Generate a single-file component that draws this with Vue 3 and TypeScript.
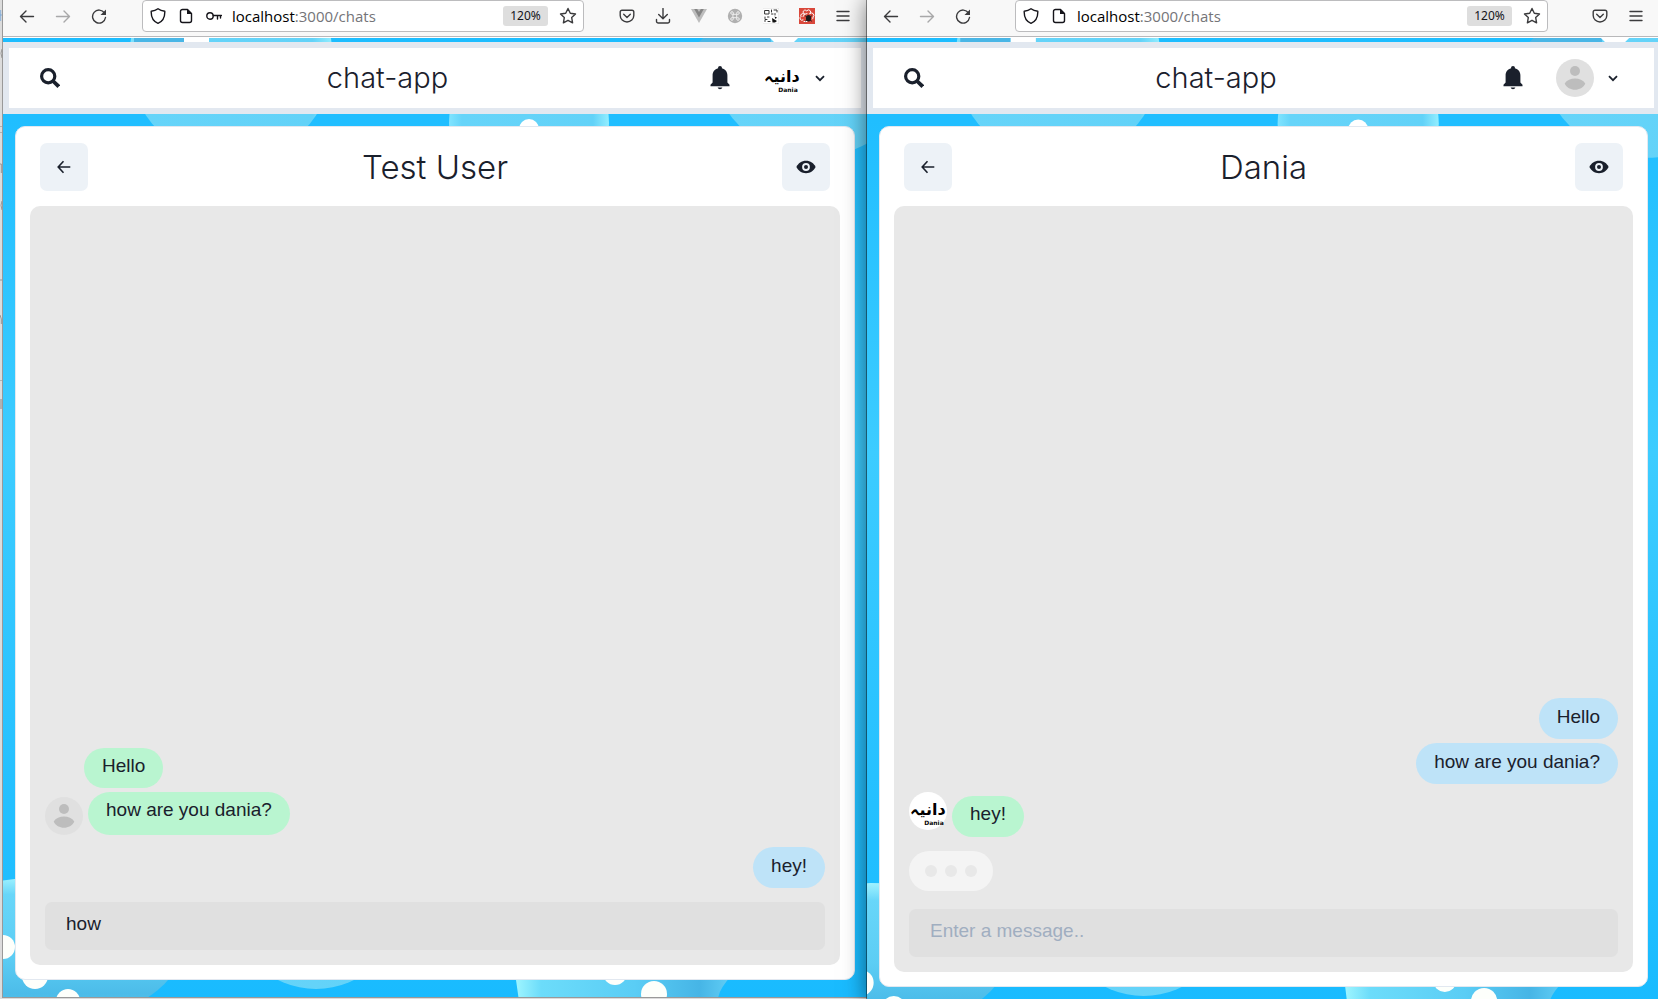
<script setup lang="ts">
import { ref } from 'vue'

interface Message {
  text: string
  mine: boolean
  avatar?: 'person' | 'logo'
  startsGroup?: boolean
}

interface BrowserWindow {
  id: string
  tools: string[]
  savedLogin: boolean
  account: 'person' | 'logo'
  peer: string
  messages: Message[]
  typing: boolean
}

const windows: BrowserWindow[] = [
  {
    id: 'left',
    tools: ['pocket', 'download', 'vue', 'command', 'qr', 'bug', 'menu'],
    savedLogin: true,
    account: 'logo',
    peer: 'Test User',
    typing: false,
    messages: [
      { text: 'Hello', mine: false },
      { text: 'how are you dania?', mine: false, avatar: 'person' },
      { text: 'hey!', mine: true, startsGroup: true },
    ],
  },
  {
    id: 'right',
    tools: ['pocket', 'menu'],
    savedLogin: false,
    account: 'person',
    peer: 'Dania',
    typing: true,
    messages: [
      { text: 'Hello', mine: true },
      { text: 'how are you dania?', mine: true },
      { text: 'hey!', mine: false, avatar: 'logo', startsGroup: true },
    ],
  },
]

const drafts = ref<Record<string, string>>({ left: 'how', right: '' })
</script>

<template>
  <main class="desktop">
    <svg class="behind" viewBox="0 0 3 999" preserveAspectRatio="none" aria-hidden="true">
      <path d="M0 15h3M1 10v11" stroke="#7aa7d8" fill="none" />
      <path d="M3 49q-3 4 0 9M3 201q-3 4 0 9M0 280h3M0 164h2v9M0 315l2 4v5" stroke="#8a8a8a" fill="none" />
      <path d="M0 126.500h3M0 132.500h3M0 380.500h3" stroke="#aaa" fill="none" />
      <path d="M1.500 399v10" stroke="#777" />
    </svg>

    <section v-for="w in windows" :key="w.id" class="window" :class="w.id">
      <nav class="toolbar" aria-label="Browser toolbar">
        <button class="tool" aria-label="Back">
          <svg width="16" height="16" viewBox="0 0 16 16"><path d="M14.500 8.500H1.500M7 3L1.500 8.500 7 14" /></svg>
        </button>
        <button class="tool off" aria-label="Forward">
          <svg width="16" height="16" viewBox="0 0 16 16"><path d="M1.500 8.500h13M9 3l5.500 5.500L9 14" /></svg>
        </button>
        <button class="tool" aria-label="Reload">
          <svg width="16" height="16" viewBox="0 0 16 16">
            <path d="M13.500 5A6.500 6.500 0 1 0 14.500 9.500" /><path d="M15 1.500V7H9.500z" fill="#3b3b3d" stroke="none" />
          </svg>
        </button>
        <div class="address">
          <svg class="mark" width="16" height="16" viewBox="0 0 16 16"><path d="M8 .8C6 2.300 3.500 3 1.200 3.200 1 9 3.500 13.500 8 15.300c4.500-1.800 7-6.300 6.800-12.100C12.500 3 10 2.300 8 .8z" /></svg>
          <svg class="mark" width="16" height="16" viewBox="0 0 16 16"><path d="M9.500 1.500h-5a2 2 0 0 0-2 2v9a2 2 0 0 0 2 2h7a2 2 0 0 0 2-2v-7z" /><path d="M9 1l5 5H9z" fill="#15141a" stroke="none" /></svg>
          <svg v-if="w.savedLogin" class="mark" width="16" height="16" viewBox="0 0 16 16"><circle cx="4" cy="8" r="3.200" /><path d="M7.200 7.500H15.500M11.500 7.500V11M14.500 7.500V10" /></svg>
          <span class="url"><b>localhost</b>:3000/chats</span>
          <button class="zoom">120%</button>
          <button class="star" aria-label="Bookmark this page">
            <svg width="18" height="18" viewBox="0 0 18 18"><path d="M9 1.500l2.300 4.800 5.200.7-3.800 3.600.9 5.200L9 13.300l-4.600 2.500.9-5.200L1.500 7l5.200-.7z" /></svg>
          </button>
        </div>
        <button v-for="t in w.tools" :key="t" class="tool" :aria-label="t">
          <svg v-if="t === 'pocket'" width="16" height="16" viewBox="0 0 16 16"><path d="M3 2.200h10a1.800 1.800 0 0 1 1.800 1.800v3.500a6.800 6.500 0 0 1-13.600 0V4A1.800 1.800 0 0 1 3 2.200zM4.700 6.300L8 9.400l3.300-3.100" /></svg>
          <svg v-else-if="t === 'download'" width="16" height="16" viewBox="0 0 16 16"><path d="M8 .5v10M3.700 6.500L8 10.700l4.300-4.200M1.500 11.500v1.700a1.800 1.800 0 0 0 1.800 1.800h9.400a1.800 1.800 0 0 0 1.800-1.800v-1.700" /></svg>
          <svg v-else-if="t === 'vue'" width="16" height="16" viewBox="0 0 16 16"><path d="M0 1h16L8 15z" fill="#bdbdbd" stroke="none" /><path d="M3.200 1h3L8 4l1.800-3h3L8 9.500z" fill="#858585" stroke="none" /></svg>
          <svg v-else-if="t === 'command'" width="16" height="16" viewBox="0 0 16 16"><circle cx="8" cy="8" r="7.200" fill="#b0b0b0" stroke="none" /><path d="M6.300 6.300h3.400v3.400H6.300zM6.300 6.300V5A1.300 1.300 0 1 0 5 6.300zM9.700 6.300H11A1.300 1.300 0 1 0 9.700 5zM9.700 9.700V11A1.300 1.300 0 1 0 11 9.700zM6.300 9.700H5A1.300 1.300 0 1 0 6.300 11z" class="thin" stroke="#eee" /></svg>
          <svg v-else-if="t === 'qr'" class="thin" width="16" height="16" viewBox="0 0 16 16">
            <path d="M0 0h16v16H0z" fill="#fff" stroke="#ddd" />
            <path d="M2 2.500h4v3.500H2zM2 9v1.500M4.500 9H6M4 11.500H2v2M5 13.500h2M8.500 2v2M8.500 6H10M11 2h3v2M12 5.500v1.500" stroke="#333" />
            <path d="M9 10l5 3-2 1.500H9.500zM11.500 8.500l2.500 1-1.500 1.500z" fill="#111" stroke="none" />
          </svg>
          <svg v-else-if="t === 'bug'" class="thin" width="16" height="16" viewBox="0 0 16 16">
            <path d="M0 0h16v16H0z" fill="#d9483b" stroke="none" />
            <path d="M5.500 6a2 2 0 1 1 2.300-3 2 2 0 1 1 3 2.500M5 6a2 2 0 0 0-3 2.500 2 2 0 0 0 2 3.500M11 5.500a2 2 0 0 1 3 3.500 2 2 0 0 1-.5 2M4 8.500a4 4 0 0 1 4-3M5 13.500h3" stroke="#fff" />
            <ellipse cx="9.500" cy="10.300" rx="2.500" ry="3.200" fill="#1c1c1c" stroke="none" /><path d="M6.500 8l6 5M12.500 8l-6 5" stroke="#1c1c1c" />
          </svg>
          <svg v-else width="16" height="16" viewBox="0 0 16 16"><path d="M2 3.500h12M2 8h12M2 12.500h12" /></svg>
        </button>
      </nav>

      <div class="page">
        <svg class="backdrop" viewBox="0 38 864 959" preserveAspectRatio="xMidYMid slice" aria-hidden="true">
          <defs>
            <linearGradient :id="w.id + '-sky'" x1="0" y1="0" x2="0" y2="1">
              <stop offset="0" stop-color="#1abcff" /><stop offset=".12" stop-color="#20beff" />
              <stop offset=".45" stop-color="#3dccff" /><stop offset=".8" stop-color="#24c0ff" /><stop offset="1" stop-color="#19bbff" />
            </linearGradient>
            <linearGradient :id="w.id + '-bubble'" x1="0" y1="0" x2="1" y2="0">
              <stop offset="0" stop-color="#80e4ff" /><stop offset=".08" stop-color="#66d4f9" />
              <stop offset=".9" stop-color="#62d2f8" /><stop offset="1" stop-color="#93eeff" />
            </linearGradient>
            <linearGradient :id="w.id + '-shade'" x1="0" y1="0" x2="1" y2="0">
              <stop offset="0" stop-color="#a0f6ff" /><stop offset=".12" stop-color="#6cdcfa" />
              <stop offset=".55" stop-color="#5acdf5" /><stop offset=".85" stop-color="#46b5e6" /><stop offset="1" stop-color="#62cff6" />
            </linearGradient>
            <linearGradient :id="w.id + '-corner'" x1="0" y1="0" x2="0" y2="1">
              <stop offset="0" stop-color="#a0f2ff" /><stop offset=".12" stop-color="#68d6f9" />
              <stop offset=".55" stop-color="#5ccdf4" /><stop offset=".8" stop-color="#4cbce9" /><stop offset="1" stop-color="#58c6ee" />
            </linearGradient>
          </defs>
          <path d="M0 0h864v1000H0z" :fill="`url(#${w.id}-sky)`" />
          <g :fill="`url(#${w.id}-bubble)`">
            <circle cx="228" cy="59" r="102" /><circle cx="526" cy="123" r="80" />
            <circle cx="812" cy="50" r="107" /><circle cx="313" cy="904" r="85" />
          </g>
          <path d="M131 38h50v4h-50zM700 38h68v4h-72z" fill="#49b6e6" />
          <path d="M181 38h25v4h-25zM767 38h28l-4 4h-20z" fill="#fff" />
          <circle cx="526" cy="129" r="10" fill="#fff" />
          <ellipse cx="42" cy="950" rx="135" ry="73" :fill="`url(#${w.id}-corner)`" />
          <path d="M512 960q0 20 4 40h199q0-10 14-25z" :fill="`url(#${w.id}-shade)`" />
          <g fill="#fdfffb">
            <circle cx="0" cy="947" r="12" /><circle cx="32" cy="976" r="13" /><circle cx="65" cy="1001" r="12" />
            <circle cx="612" cy="973" r="12" /><circle cx="651" cy="994" r="13" />
          </g>
        </svg>

        <header class="appbar">
          <button class="search" aria-label="Search user">
            <svg width="20" height="20" viewBox="0 0 20 20"><circle cx="8.200" cy="8.200" r="6.600" fill="none" stroke="#1a202c" stroke-width="3.200" /><path d="M13 13l5.800 5.600" stroke="#1a202c" stroke-width="3.800" /></svg>
          </button>
          <h1 class="brand">chat-app</h1>
          <div class="account">
            <button class="bell" aria-label="Notifications">
              <svg width="20" height="24" viewBox="0 0 20 24"><path d="M10 0c-1.200 0-1.900.8-1.900 1.800v.4C4.700 3 2.600 5.700 2.600 9.400v7.200L.5 18.800v1.400h19v-1.400l-2.100-2.200V9.400c0-3.700-2.100-6.400-5.500-7.200v-.4C11.900.8 11.200 0 10 0zM7.600 21.400a2.500 2.500 0 0 0 4.800 0z" fill="#1a202c" /></svg>
            </button>
            <button class="profile" aria-label="Account menu">
              <svg v-if="w.account === 'person'" class="avatar" viewBox="0 0 38 38"><circle cx="19" cy="19" r="19" fill="#e0e0e0" /><circle cx="19" cy="12" r="5" fill="#bdbdbd" /><path d="M8.700 24.500c4-6.600 16.600-6.600 20.600 0-3.500 8.300-17.100 8.300-20.600 0z" fill="#bdbdbd" /></svg>
              <svg v-else class="avatar" viewBox="0 0 38 38"><circle cx="19" cy="19" r="19" fill="#fff" /><text x="19" y="23" class="script">دانیہ</text><text x="25" y="33" class="caption">Dania</text></svg>
              <svg width="20" height="20" viewBox="0 0 20 20"><path d="M6 8.200l4 4 4-4" fill="none" stroke="#1a202c" stroke-width="1.800" /></svg>
            </button>
          </div>
        </header>

        <article class="card">
          <div class="head">
            <button class="square" aria-label="Back to chats">
              <svg width="14" height="14" viewBox="0 0 14 14"><path d="M13.300 7H1.500M6.500 1.300L1.200 7l5.300 5.700" fill="none" stroke="#1a202c" stroke-width="1.600" /></svg>
            </button>
            <h2 class="peer">{{ w.peer }}</h2>
            <button class="square" aria-label="View profile">
              <svg width="20" height="14" viewBox="0 0 20 14"><path d="M10 .8c4.500 0 7.800 2.500 9.600 6.200-1.800 3.700-5.100 6.200-9.600 6.200S2.200 10.700.4 7C2.200 3.300 5.500.8 10 .8z" fill="#1a202c" /><circle cx="10" cy="7" r="3.900" fill="#edf2f7" /><circle cx="10" cy="7" r="2" fill="#1a202c" /></svg>
            </button>
          </div>
          <div class="chat">
            <div class="log">
              <div v-for="m in w.messages" :key="m.text" class="row" :class="{ mine: m.mine, group: m.startsGroup, bare: !m.mine && !m.avatar }">
                <svg v-if="m.avatar === 'person'" class="avatar low" viewBox="0 0 38 38"><circle cx="19" cy="19" r="19" fill="#e0e0e0" /><circle cx="19" cy="12" r="5" fill="#bdbdbd" /><path d="M8.700 24.500c4-6.600 16.600-6.600 20.600 0-3.500 8.300-17.100 8.300-20.600 0z" fill="#bdbdbd" /></svg>
                <svg v-else-if="m.avatar === 'logo'" class="avatar" viewBox="0 0 38 38"><circle cx="19" cy="19" r="19" fill="#fff" /><text x="19" y="23" class="script">دانیہ</text><text x="25" y="33" class="caption">Dania</text></svg>
                <span class="bubble">{{ m.text }}</span>
              </div>
            </div>
            <div v-if="w.typing" class="typing" role="status" aria-label="Typing"><i></i><i></i><i></i></div>
            <input v-model="drafts[w.id]" class="entry" type="text" placeholder="Enter a message.." aria-label="Message" />
          </div>
        </article>
      </div>
    </section>
  </main>
</template>

<style>
body { margin: 0; overflow: hidden; }
</style>

<style scoped>
* { box-sizing: border-box; }
button { border: 0; padding: 0; background: none; font: inherit; color: inherit; display: flex; align-items: center; justify-content: center; }
svg { display: block; flex: none; }
.desktop { display: flex; height: 100vh; overflow: hidden; background: #dcdcdc; font-family: "Liberation Sans", Arial, sans-serif; color: #1a202c; }
.behind { width: 2px; height: 100%; }
.window { display: flex; flex-direction: column; min-width: 0; }
.left { flex: 864 1 0; height: calc(100% - 1px); border-left: 1px solid #999; border-bottom: 1px solid #999; }
.right { flex: 793 1 0; height: calc(100% + 5px); margin-right: -2px; z-index: 1; box-shadow: -1px 0 0 rgba(0, 0, 0, .4), 0 0 22px rgba(0, 0, 0, .55); }

.toolbar { display: flex; align-items: flex-start; height: 38px; padding: 0 6px; background: #f8f8f8; border-bottom: 1px solid #fff; box-shadow: inset 0 -1px 0 #b8b8ba; }
.tool { width: 36px; height: 32px; }
.tool svg, .star svg, .mark { fill: none; stroke: #3b3b3d; stroke-width: 1.4; stroke-linejoin: round; stroke-linecap: round; }
.tool svg.thin, .tool .thin { stroke-width: 1; }
.tool.off { opacity: .42; }
.address { display: flex; align-items: center; flex: 1; height: 32px; margin: 0 25px; padding: 0 6px 0 7px; border: 1px solid #bcbcbe; border-radius: 4px; background: #fff; }
.right .address { margin: 0 34px; }
.mark { margin-right: 12px; stroke: #15141a; }
.url { flex: 1; margin-left: -2px; font: 15px/20px "Open Sans", "Noto Sans", sans-serif; color: #747478; white-space: nowrap; }
.url b { font-weight: 400; color: #000; }
.zoom { width: 45px; height: 20px; border-radius: 3px; background: #dedede; font: 12px/20px "Noto Sans", sans-serif; color: #15141a; }
.star { margin-left: 11px; }

.page { position: relative; flex: 1; display: flex; flex-direction: column; min-height: 0; padding-top: 4px; }
.backdrop { position: absolute; inset: 0; width: 100%; height: 100%; }
.appbar { position: relative; display: flex; align-items: center; justify-content: space-between; height: 72px; padding: 0 12px; border: 6px solid #e2e8f0; background: #fff; }
.search { width: 58px; height: 48px; }
.brand { margin: 0; font: 300 29px/40px Inter, Roboto, sans-serif; }
.account { display: flex; align-items: center; }
.bell { width: 48px; height: 48px; }
.profile { gap: 9px; padding: 0 19px; height: 48px; }
.avatar { width: 38px; height: 38px; }
.script { font: bold 16px "DejaVu Sans", sans-serif; text-anchor: middle; fill: #000; }
.caption { font: bold 6px "DejaVu Sans", sans-serif; text-anchor: middle; fill: #000; }

.card { position: relative; flex: 1; display: flex; flex-direction: column; min-height: 0; margin: 12px 12px 17px; padding: 0 14px 14px; border: 1px solid #e2e8f0; border-radius: 10px; background: #fff; }
.head { display: flex; align-items: center; justify-content: space-between; height: 79px; padding: 0 10px; }
.square { width: 48px; height: 48px; border-radius: 7px; background: #edf2f7; }
.peer { margin: 0; font: 300 33px/48px Inter, Roboto, sans-serif; }
.chat { flex: 1; display: flex; flex-direction: column; min-height: 0; padding: 15px; border-radius: 10px; background: #e8e8e8; }
.log { flex: 1; display: flex; flex-direction: column; justify-content: flex-end; gap: 4px; }
.row { display: flex; align-items: stretch; gap: 5px; }
.row.mine { justify-content: flex-end; }
.row.group { margin-top: 8px; }
.row.bare { padding-left: 39px; }
.row .avatar { margin-top: -4px; }
.row .avatar.low { margin-top: 5px; }
.bubble { padding: 3px 18px 9px; border-radius: 24px; font-size: 19px; line-height: 29px; background: #b9f5d0; }
.bare .bubble { padding-bottom: 8px; }
.mine .bubble { padding: 4px 18px 8px; background: #bee3f8; }
.typing { display: flex; align-items: center; justify-content: center; gap: 8px; width: 84px; height: 40px; margin: 14px 0 4px; border-radius: 20px; background: #f4f4f4; }
.typing i { width: 12px; height: 12px; border-radius: 50%; background: #e8e8e8; }
.entry { height: 48px; width: 100%; margin-top: 14px; padding: 0 21px 5px; border: 0; border-radius: 7px; background: #e0e0e0; font: 19px/24px "Liberation Sans", Arial, sans-serif; color: #1a202c; outline: 0; }
.entry::placeholder { color: #a0aec0; opacity: 1; }
</style>
